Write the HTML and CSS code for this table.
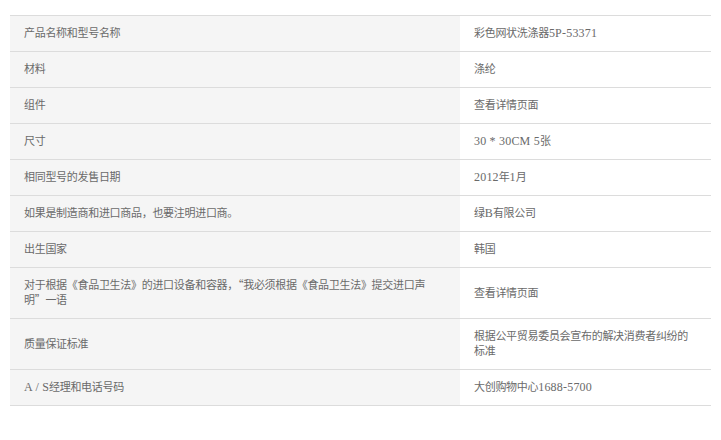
FILE: index.html
```html
<!DOCTYPE html>
<html lang="zh">
<head>
<meta charset="utf-8">
<link rel="stylesheet" href="styles.css">
</head>
<body>
<div class="wrap">
<table class="spec">
<tr><th>产品名称和型号名称</th><td>彩色网状洗涤器<span class="num">5P-53371</span></td></tr>
<tr><th>材料</th><td>涤纶</td></tr>
<tr><th>组件</th><td>查看详情页面</td></tr>
<tr><th>尺寸</th><td><span class="num">30 * 30CM 5</span>张</td></tr>
<tr><th>相同型号的发售日期</th><td><span class="num">2012</span>年<span class="num">1</span>月</td></tr>
<tr><th>如果是制造商和进口商品，也要注明进口商。</th><td>绿<span class="num">B</span>有限公司</td></tr>
<tr><th>出生国家</th><td>韩国</td></tr>
<tr><th>对于根据《食品卫生法》的进口设备和容器，<span class="cjk">“</span>我必须根据《食品卫生法》提交进口声<br>明<span class="cjk">”</span>一语</th><td>查看详情页面</td></tr>
<tr><th>质量保证标准</th><td>根据公平贸易委员会宣布的解决消费者纠纷的<br>标准</td></tr>
<tr><th><span class="num">A / S</span>经理和电话号码</th><td>大创购物中心<span class="num">1688-5700</span></td></tr>
</table>
</div>
</body>
</html>
```

FILE: styles.css
```css
html, body {
  margin: 0;
  padding: 0;
  background: #fff;
}
.wrap {
  padding: 15px 10px;
}
.spec {
  width: 701px;
  border-collapse: collapse;
  border-top: 1px solid #dcdcdc;
  font-family: "Liberation Serif", "Noto Sans CJK SC", serif;
  font-size: 11px;
  letter-spacing: -0.3px;
  line-height: 15px;
  color: #6a6a6a;
}
.spec th,
.spec td {
  text-align: left;
  font-weight: normal;
  vertical-align: middle;
  padding: 10px 14px;
  border-bottom: 1px solid #dcdcdc;
}
.spec th {
  width: 422px;
  background: #f5f5f5;
}
.spec td {
  background: #fff;
}
.num {
  font-size: 12px;
  letter-spacing: 0.2px;
  line-height: 1;
}
.cjk {
  font-family: "Noto Sans CJK SC", sans-serif;
  line-height: 1;
}
```
